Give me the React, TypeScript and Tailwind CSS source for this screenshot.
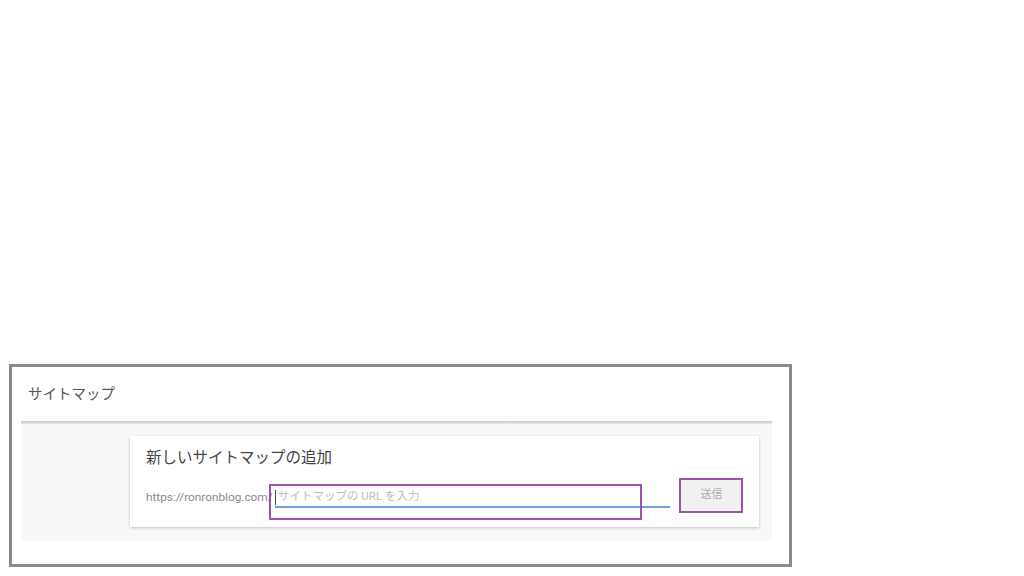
import React from 'react';

const jp = { fontFamily: "Roboto, 'Noto Sans CJK JP', sans-serif" };

const App: React.FC = () => {
  return (
    <div className="w-[1024px] h-[576px] bg-white overflow-hidden pt-[364px] pl-[9px]" style={jp}>
      <div className="w-[783px] h-[203px] border-[3px] border-[#8a8a8a] bg-white">
        <div className="ml-[9px] mr-[17px]">
          {/* header */}
          <div className="h-[54px] flex items-center pl-[7px] pt-[2px]">
            <span className="text-[14.5px] text-[#555]">サイトマップ</span>
          </div>
          <div className="h-[3px] bg-gradient-to-b from-[#c4c4c4] to-[#ececec]" />

          {/* body */}
          <div className="bg-[#f8f8f8] h-[117px] pt-[12px] pl-[109px] pr-[13px]">
            <div className="bg-white h-[91px] shadow-[0_1px_3px_rgba(0,0,0,0.22)] pl-[16px] pr-[16px] pt-[11px]">
              <div className="text-[15.5px] text-[#444] leading-[22px]">新しいサイトマップの追加</div>
              <div className="flex items-center mt-[19px] h-[20px]">
                <span className="text-[11.8px] text-[#8a8a8a] w-[129px]">https://ronronblog.com/</span>
                <div className="relative w-[395px] h-[20px] border-b-2 border-[#6e9ee6] flex items-center">
                  <span className="w-px h-[15px] bg-[#555] mr-[2px]" />
                  <span className="text-[11.5px] text-[#bdbdbd]">サイトマップの URL を入力</span>
                  <div className="absolute left-[-6px] top-[-4px] w-[373px] h-[36px] border-2 border-[#a24fae]" />
                </div>
                <div className="relative ml-[11px] w-[61px] h-[33px] shrink-0 bg-[#f1f1f1] flex items-center justify-center -mt-[5px]">
                  <span className="text-[11px] text-[#aaa]">送信</span>
                  <div className="absolute left-[-2px] top-[-1px] w-[64px] h-[35px] border-2 border-[#a24fae]" />
                </div>
              </div>
            </div>
          </div>
        </div>
      </div>
    </div>
  );
};

export default App;
